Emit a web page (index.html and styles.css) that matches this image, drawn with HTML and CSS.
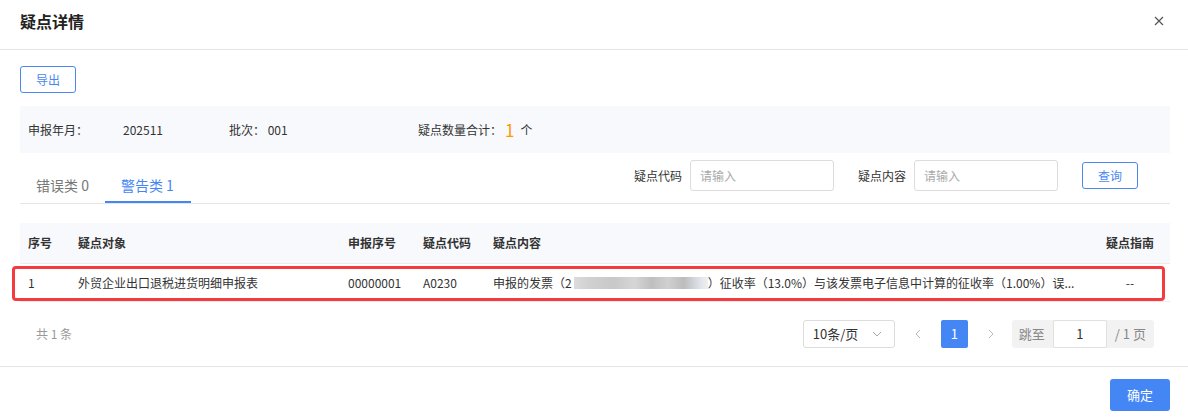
FILE: index.html
```html
<!DOCTYPE html>
<html lang="zh-CN">
<head>
<meta charset="utf-8">
<title>疑点详情</title>
<link rel="stylesheet" href="styles.css">
</head>
<body>
<div class="dialog">
  <div class="dlg-header">
    <span class="dlg-title">疑点详情</span>
    <span class="dlg-close"><svg width="10" height="10" viewBox="0 0 10 10"><path d="M1 1L9 9M9 1L1 9" stroke="#555" stroke-width="1.2" fill="none"/></svg></span>
  </div>
  <div class="dlg-body">
    <button class="btn btn-outline btn-export">导出</button>
    <div class="info-bar">
      <span class="info-label w95">申报年月：</span>
      <span class="info-value w106">202511</span>
      <span class="info-label w189">批次： 001</span>
      <span class="info-label">疑点数量合计：</span>
      <span class="info-count">1</span>
      <span class="info-label">个</span>
    </div>
    <div class="tab-row">
      <div class="tabs">
        <div class="tab">错误类 0</div>
        <div class="tab active">警告类 1</div>
      </div>
      <div class="filters">
        <label class="f-label">疑点代码</label>
        <input class="f-input" placeholder="请输入">
        <label class="f-label">疑点内容</label>
        <input class="f-input" placeholder="请输入">
        <button class="btn btn-outline btn-query">查询</button>
      </div>
    </div>
    <div class="table-wrap">
      <table class="grid">
        <colgroup>
          <col class="c1"><col class="c2"><col class="c3"><col class="c4"><col class="c5"><col class="c6">
        </colgroup>
        <thead>
          <tr><th>序号</th><th>疑点对象</th><th>申报序号</th><th>疑点代码</th><th>疑点内容</th><th class="center">疑点指南</th></tr>
        </thead>
        <tbody>
          <tr>
            <td>1</td>
            <td>外贸企业出口退税进货明细申报表</td>
            <td>00000001</td>
            <td>A0230</td>
            <td class="ellipsis">申报的发票（2<span class="mosaic"></span>）征收率（13.0%）与该发票电子信息中计算的征收率（1.00%）误...</td>
            <td class="center">--</td>
          </tr>
        </tbody>
      </table>
      <div class="highlight"></div>
    </div>
    <div class="pager-row">
      <span class="total">共 1 条</span>
      <div class="pager">
        <div class="size-select"><span>10条/页</span><svg width="10" height="6" viewBox="0 0 10 6"><path d="M1 1L5 5L9 1" stroke="#aaa" stroke-width="1" fill="none"/></svg></div>
        <span class="arrow"><svg width="6" height="10" viewBox="0 0 6 10"><path d="M5 1L1 5L5 9" stroke="#bbb" stroke-width="1" fill="none"/></svg></span>
        <span class="page active">1</span>
        <span class="arrow"><svg width="6" height="10" viewBox="0 0 6 10"><path d="M1 1L5 5L1 9" stroke="#bbb" stroke-width="1" fill="none"/></svg></span>
        <div class="jumper">
          <span class="j-label">跳至</span>
          <span class="j-input">1</span>
          <span class="j-label">/ 1 页</span>
        </div>
      </div>
    </div>
  </div>
  <div class="dlg-footer">
    <button class="btn btn-primary">确定</button>
  </div>
</div>
</body>
</html>
```

FILE: styles.css
```css
* { box-sizing: border-box; }
html, body { margin: 0; padding: 0; background: #fff; }
body {
  font-family: "Noto Sans CJK SC", "Microsoft YaHei", "Liberation Sans", sans-serif;
  font-size: 12px;
  color: #333;
}
.dialog { width: 1188px; height: 417px; overflow: hidden; }

.dlg-header {
  height: 50px;
  border-bottom: 1px solid #e4e4e4;
  padding: 9px 24px 0 20px;
  display: flex;
  justify-content: space-between;
  align-items: flex-start;
}
.dlg-title { font-size: 16px; font-weight: 700; line-height: 24px; color: #222; }
.dlg-close { display: flex; padding-top: 7px; }

.dlg-body { padding: 16px 18px 0 20px; }

.btn {
  font-family: inherit;
  font-size: 12px;
  border-radius: 3px;
  cursor: pointer;
  padding: 0;
}
.btn-outline { background: #fff; border: 1px solid #4a88f0; color: #4a88f0; }
.btn-export { width: 56px; height: 27px; display: block; }
.btn-query { width: 56px; height: 27px; margin-top: 2px; }
.btn-primary { background: #4487f4; border: none; color: #fff; width: 60px; height: 32px; font-size: 13px; }

.info-bar {
  margin-top: 13px;
  height: 47px;
  background: #f7f9fc;
  display: flex;
  align-items: center;
  padding-left: 8px;
}
.info-label, .info-value { line-height: 20px; color: #333; }
.w95 { width: 95px; }
.w106 { width: 106px; }
.w189 { width: 189px; }
.info-count { color: #f90; font-size: 17px; margin: 0 6px 0 3px; line-height: 20px; }

.tab-row {
  height: 51px;
  border-bottom: 1px solid #e6e6e6;
  display: flex;
  justify-content: space-between;
}
.tabs { display: flex; align-items: flex-end; }
.tab {
  font-size: 14px;
  line-height: 20px;
  padding: 0 16px 6px;
  border-bottom: 2px solid transparent;
  color: #777;
}
.tab.active { color: #4487f4; border-bottom-color: #4487f4; padding-right: 17px; }
.filters { display: flex; align-items: flex-start; padding-top: 7px; padding-right: 32px; }
.f-label { line-height: 31px; margin-right: 8px; color: #333; }
.f-input {
  width: 144px;
  height: 31px;
  border: 1px solid #dcdcdc;
  border-radius: 3px;
  padding: 0 9px;
  font-family: inherit;
  font-size: 12px;
  margin-right: 24px;
  outline: none;
}
.f-input::placeholder { color: #aaa; }

.table-wrap { position: relative; margin-top: 19px; }
.grid { width: 100%; border-collapse: collapse; table-layout: fixed; }
.c1 { width: 50px; } .c2 { width: 270px; } .c3 { width: 75px; } .c4 { width: 70px; } .c6 { width: 80px; }
.grid th {
  background: #f7f9fc;
  height: 40px;
  text-align: left;
  font-weight: 700;
  padding: 0 8px;
  color: #333;
  border-bottom: 1px solid #ececec;
}
.grid td {
  height: 38px;
  padding: 0 8px;
  border-bottom: 1px solid #ececec;
  white-space: nowrap;
  color: #333;
}
.grid .center { text-align: center; }
.ellipsis { overflow: hidden; text-overflow: clip; }
.mosaic {
  display: inline-block;
  width: 134px;
  height: 12px;
  margin-left: 2px;
  vertical-align: -1px;
  background: linear-gradient(90deg, #dcdcdc 0, #d0d0d0 12%, #c8c8c8 30%, #d6d6d6 45%, #bfbfbf 58%, #d0d0d0 70%, #bcbcbc 82%, #dfe3ea 94%, #f0f0f0 100%);
  filter: blur(0.6px);
}
.highlight {
  position: absolute;
  left: -8px;
  right: 5px;
  top: 43px;
  height: 35px;
  border: 3px solid #f43b3d;
  border-radius: 4px;
  pointer-events: none;
}

.pager-row {
  display: flex;
  justify-content: space-between;
  align-items: center;
  padding: 0 16px;
  height: 64px;
}
.total { color: #999; }
.pager { display: flex; align-items: center; }
.size-select {
  width: 92px;
  height: 28px;
  border: 1px solid #dcdcdc;
  border-radius: 3px;
  display: flex;
  align-items: center;
  justify-content: space-between;
  padding: 0 12px 0 9px;
  font-size: 13px;
  color: #333;
}
.arrow { width: 46px; display: flex; justify-content: center; }
.page {
  width: 27px;
  height: 28px;
  border-radius: 2px;
  display: flex;
  align-items: center;
  justify-content: center;
  font-size: 13px;
}
.page.active { background: #4487f4; color: #fff; }
.jumper {
  display: flex;
  align-items: center;
  height: 28px;
  background: #f2f2f2;
  border-radius: 3px;
  padding: 0 8px 0 7px;
  margin-left: -2px;
}
.j-label { color: #888; font-size: 13px; }
.j-input {
  width: 54px;
  height: 28px;
  background: #fff;
  border: 1px solid #e0e0e0;
  border-radius: 2px;
  display: flex;
  align-items: center;
  justify-content: center;
  margin: 0 8px;
  font-size: 13px;
  color: #333;
}

.dlg-footer {
  border-top: 1px solid #e4e4e4;
  display: flex;
  justify-content: flex-end;
  padding: 12px 18px 0 0;
}
```
